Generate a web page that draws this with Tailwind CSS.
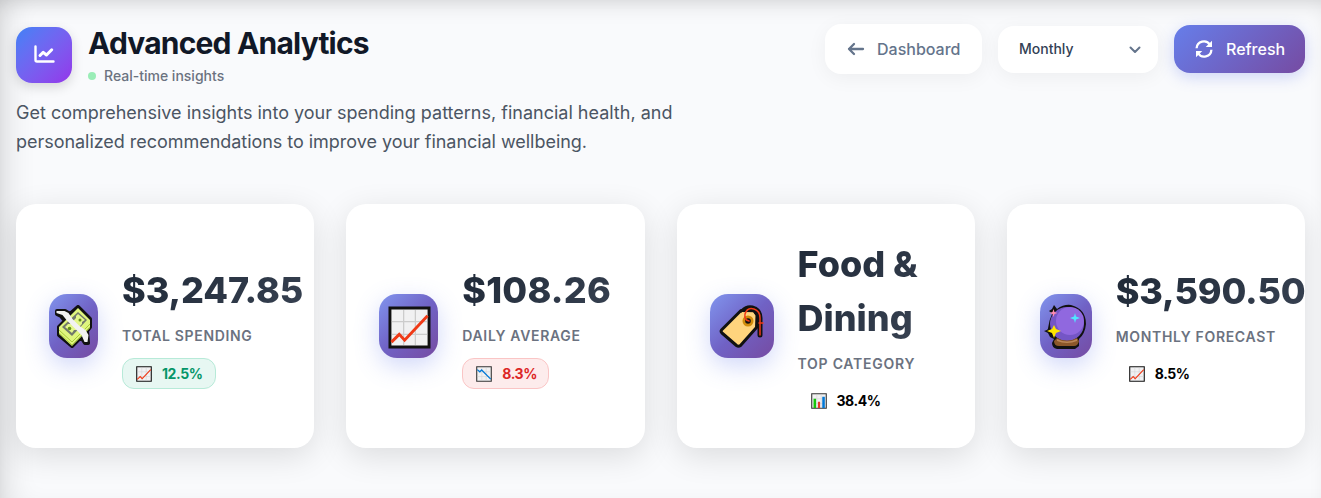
<!DOCTYPE html>
<html lang="en">
<head>
<meta charset="utf-8">
<title>Advanced Analytics</title>
<script src="https://cdn.jsdelivr.net/npm/@tailwindcss/browser@4"></script>
</head>
<body class="h-[498px] overflow-hidden bg-[#f9fafc] font-['Inter',sans-serif]">
<svg class="hidden">
  <defs>
    <symbol id="up" viewBox="0 0 44 44"><path fill="#f1f1f2" stroke="#111" stroke-width="3" d="M2 2h40v40H2z"/><path d="M16 4v36M28 4v36M4 16h36M4 29h36" stroke="#ccc" stroke-width="1.3"/><path d="m3.500 37 8-8 5.500 6L40.500 10" fill="none" stroke="#f03a17" stroke-width="3"/></symbol>
    <symbol id="down" viewBox="0 0 44 44"><path fill="#f1f1f2" stroke="#333" stroke-width="3" d="M2 2h40v40H2z"/><path d="M16 4v36M28 4v36M4 16h36M4 29h36" stroke="#ccc" stroke-width="1.3"/><path d="m3.500 10 7 6 5-5L40.500 36" fill="none" stroke="#0078d7" stroke-width="3.500"/></symbol>
    <symbol id="bars" viewBox="0 0 44 44"><path fill="#f1f1f2" stroke="#333" stroke-width="3" d="M2 2h40v40H2z"/><path d="M16 4v36M28 4v36M4 16h36M4 29h36" stroke="#ccc" stroke-width="1.3"/><path fill="#16c60c" d="M7 16h7v25H7z"/><path fill="#e8372b" d="M19 24h6v17h-6z"/><path fill="#0078d7" d="M31 10h7v31h-7z"/></symbol>
  </defs>
</svg>
<div class="h-[498px] px-4 pt-6 shadow-[inset_24px_0_32px_-20px_rgba(0,0,0,0.14),inset_0_14px_24px_-14px_rgba(0,0,0,0.18)]">
  <header class="flex h-[132px] items-start justify-between">
    <div class="w-[672px]">
      <div class="flex gap-4 pt-[3px]">
        <div class="flex size-14 items-center justify-center rounded-2xl bg-linear-to-br from-[#3b82f6] to-[#9333ea] shadow-[0_4px_12px_rgba(0,0,0,0.15)]">
          <svg class="size-6" viewBox="0 0 24 24" fill="none" stroke="#fff" stroke-width="2.400" stroke-linecap="round" stroke-linejoin="round"><path d="M3.500 3.500v13.500a1.500 1.500 0 0 0 1.500 1.500h16.500"/><path d="m8 12.500 3.200-3.200 3.300 2.700 5.200-5.200" stroke-width="3"/></svg>
        </div>
        <div>
          <h1 class="-mt-0.5 h-[37px] whitespace-nowrap text-[30px] leading-[37px] font-bold tracking-[-0.027em] text-[#111827]">Advanced Analytics</h1>
          <div class="mt-1 flex h-5 items-center gap-2 text-sm font-medium text-[#6b7280]"><span class="size-2 rounded-full bg-[#9aedb7]"></span>Real-time insights</div>
        </div>
      </div>
      <p class="mt-3 whitespace-nowrap text-lg leading-[29.25px] text-[#4b5563]">Get comprehensive insights into your spending patterns, financial health, and<br><span class="tracking-[-0.002em]">personalized recommendations to improve your financial wellbeing.</span></p>
    </div>
    <div class="flex items-center gap-4">
      <button class="flex h-[50px] w-[157px] items-center gap-3 rounded-2xl bg-white pl-[22px] text-base font-medium text-[#64748b] shadow-[0_4px_20px_rgba(0,0,0,0.05)]">
        <svg class="size-[18px]" viewBox="0 0 18 18" fill="none" stroke="currentColor" stroke-width="2.300" stroke-linecap="round" stroke-linejoin="round"><path d="M16 9H2M7 4 2 9l5 5"/></svg>Dashboard</button>
      <button class="flex h-[47px] w-40 items-center justify-between rounded-2xl bg-white pr-[17px] pl-[21px] text-sm font-medium text-[#334155] shadow-[0_4px_20px_rgba(0,0,0,0.05)]">Monthly
        <svg class="size-3" viewBox="0 0 12 12" fill="none" stroke="#64748b" stroke-width="2" stroke-linecap="round" stroke-linejoin="round"><path d="m1.500 4.500 4.500 4.500L10.500 4.500"/></svg></button>
      <button class="flex h-12 w-[131px] items-center gap-[13px] rounded-2xl bg-linear-[135deg] from-[#667eea] to-[#764ba2] pl-[21px] text-base font-medium text-white shadow-[0_4px_15px_rgba(102,126,234,0.3)]">
        <svg class="size-[18px]" viewBox="0 0 18 18" fill="none" stroke="currentColor" stroke-width="2.300"><path d="M1.600 8.300A7.200 7.200 0 0 1 15 5M16.400 9.700A7.200 7.200 0 0 1 3 13"/><path fill="currentColor" stroke="none" d="M17 .8v6.300h-6.300zM1 17.200v-6.300h6.300z"/></svg>Refresh</button>
    </div>
  </header>

  <main class="mt-12 grid grid-cols-4 gap-8">
    <section class="flex h-[244px] items-center gap-6 overflow-hidden rounded-[20px] bg-white pl-[33px] shadow-[0_8px_32px_rgba(0,0,0,0.12)]">
      <div class="flex h-16 w-[49px] shrink-0 items-center justify-center rounded-[18px] bg-linear-[135deg] from-[#8195ee] via-[#7062c5] to-[#764ba2] shadow-[0_8px_24px_rgba(102,126,234,0.3)]">
        <svg class="mt-0.5 h-[44px] w-[40px] shrink-0" viewBox="0 0 40 44"><path d="M3 6h8l5 3 8-7 12 12v8l-3 4 1 12h-3l-4-6-9 9L5 30v-8l6-6-4-5-4-2z" fill="#111" stroke="#111" stroke-width="4" stroke-linejoin="round"/><path fill="#dff57e" d="m5 22 19-19 12 12v8L18 41 5 29z"/><path d="m5 25 13 12 18-18M5 28l13 12 18-18" fill="none" stroke="#a8cb37" stroke-width="1"/><path fill="#71786b" d="m8 22 16-15 9 8-15 16z"/><path fill="#e3f78a" d="m11 22 3-3h2l6-6v-2l2-2 7 6-3 2v2l-6 6h-2l-2 3z"/><circle cx="15.500" cy="23.500" r="1.800" fill="#64901c"/><circle cx="26" cy="15" r="1.500" fill="#64901c"/><path d="M2.500 6h8l4 2 4 6 7 7 6 4 3 5-1 7h-3l-3-7-6-6-9-9-4-5-6-2z" fill="#f2f2f2"/></svg>
      </div>
      <div class="shrink-0">
        <div class="text-4xl leading-[54px] font-extrabold tracking-[-0.003em] bg-linear-[135deg] from-[#1f2937] to-[#374151] bg-clip-text text-transparent">$3,247.85</div>
        <div class="mt-2 h-[21px] text-sm leading-[21px] font-semibold tracking-[0.048em] text-[#6b7280]">TOTAL SPENDING</div>
        <div class="mt-3 flex h-[31px] w-[94px] items-center gap-2.5 rounded-xl border border-[#b7ead8] bg-[#e7f7f2] pl-[13px] text-sm font-bold tracking-[-0.03em] text-[#059669]"><svg class="size-4"><use href="#up"/></svg>12.5%</div>
      </div>
    </section>
    <section class="flex h-[244px] items-center gap-6 overflow-hidden rounded-[20px] bg-white pl-[33px] shadow-[0_8px_32px_rgba(0,0,0,0.12)]">
      <div class="flex h-16 w-[59px] shrink-0 items-center justify-center rounded-[18px] bg-linear-[135deg] from-[#8195ee] via-[#7062c5] to-[#764ba2] shadow-[0_8px_24px_rgba(102,126,234,0.3)]"><svg class="mt-0.5 ml-0.5 size-[43px]"><use href="#up"/></svg></div>
      <div class="shrink-0">
        <div class="text-4xl leading-[54px] font-extrabold tracking-[0.006em] bg-linear-[135deg] from-[#1f2937] to-[#374151] bg-clip-text text-transparent">$108.26</div>
        <div class="mt-2 h-[21px] text-sm leading-[21px] font-semibold tracking-[0.048em] text-[#6b7280]">DAILY AVERAGE</div>
        <div class="mt-3 flex h-[31px] w-[87px] items-center gap-2.5 rounded-xl border border-[#fac5c5] bg-[#fdecec] pl-[13px] text-sm font-bold tracking-[-0.03em] text-[#dc2626]"><svg class="size-4"><use href="#down"/></svg>8.3%</div>
      </div>
    </section>
    <section class="flex h-[244px] items-center gap-6 overflow-hidden rounded-[20px] bg-white pl-[33px] shadow-[0_8px_32px_rgba(0,0,0,0.12)]">
      <div class="flex size-16 shrink-0 items-center justify-center rounded-[18px] bg-linear-[135deg] from-[#8195ee] via-[#7062c5] to-[#764ba2] shadow-[0_8px_24px_rgba(102,126,234,0.3)]"><svg class="h-[46px] w-[46px]" viewBox="0 0 46 46" fill="none" stroke-linecap="round" stroke-linejoin="round"><path fill="#ffd47d" stroke="#111" stroke-width="3" d="M2.500 27 22 7.500l13 .5 3 4-.5 12.500-16 18q-2 1.500-4 0L3 30q-1.500-1.500-.5-3z"/><path d="M24 8q5-5 12-2 5 3 5 9v17" stroke="#111" stroke-width="5"/><path fill="#ffd47d" d="m23 9 11 .5 2 3v11l-8 6-8-16z"/><circle cx="29" cy="18" r="5.500" fill="#d18b0b"/><circle cx="29" cy="18" r="2.800" fill="#111"/><path d="M30 18q-5-1-4-7 2-7 9-5 6 2 6 9v17M40 20h4" stroke="#f03a17" stroke-width="1.500"/></svg></div>
      <div class="shrink-0 pt-px">
        <div class="text-4xl leading-[54px] font-extrabold bg-linear-[135deg] from-[#1f2937] to-[#374151] bg-clip-text text-transparent">Food &amp;<br>Dining</div>
        <div class="mt-2 h-[21px] text-sm leading-[21px] font-semibold tracking-[0.054em] text-[#6b7280]">TOP CATEGORY</div>
        <div class="mt-[11px] flex h-[31px] items-center gap-2.5 pl-[13px] text-sm font-bold tracking-[-0.03em] text-black"><svg class="size-4"><use href="#bars"/></svg>38.4%</div>
      </div>
    </section>
    <section class="flex h-[244px] items-center gap-6 overflow-hidden rounded-[20px] bg-white pl-[33px] shadow-[0_8px_32px_rgba(0,0,0,0.12)]">
      <div class="flex h-16 w-[52px] shrink-0 items-center justify-center rounded-[18px] bg-linear-[135deg] from-[#8195ee] via-[#7062c5] to-[#764ba2] shadow-[0_8px_24px_rgba(102,126,234,0.3)]"><svg class="h-[46px] w-[43px]" viewBox="0 0 43 46"><path d="m5 28 2-10 3-8" stroke="#111" stroke-width="3" fill="none"/><path d="M0 28q5-1 6-5 0-8 3-12l-4-3 3-2 2-4 3 4Q20 1 27 2q15 4 15 19-1 10-7 15v7l-4 3H13q-5-1-5-6l2-4-4-2-2-4z" fill="#111"/><circle cx="23" cy="21" r="17" fill="#7456c6"/><ellipse cx="26" cy="18" rx="14" ry="14" fill="#9068df"/><path d="M13 35q10 5 20 0l2 3q-1 5-5 5H15q-5 0-5-5z" fill="#8b572a"/><path d="M13 36q10 5 20 0v2q-10 4-20 0z" fill="#bb8657"/><path d="m10 22 2 4 5 2-5 2-2 5-2-5-5-2 5-2z" fill="#ffe600"/><path d="m31 10 1 3.500 4 1.500-4 1.500-1 3.500-1-3.500-4-1.500 4-1.500z" fill="#50e6ff"/><path d="m9.500 6 1 3 3 1-3 1-1 3-1-3-3-1 3-1z" fill="#ff8bb0"/></svg></div>
      <div class="shrink-0 pt-px">
        <div class="text-4xl leading-[54px] font-extrabold tracking-[-0.005em] bg-linear-[135deg] from-[#1f2937] to-[#374151] bg-clip-text text-transparent">$3,590.50</div>
        <div class="mt-2 h-[21px] text-sm leading-[21px] font-semibold tracking-[0.048em] text-[#6b7280]">MONTHLY FORECAST</div>
        <div class="mt-[11px] flex h-[31px] items-center gap-2.5 pl-[13px] text-sm font-bold tracking-[-0.03em] text-black"><svg class="size-4"><use href="#up"/></svg>8.5%</div>
      </div>
    </section>
  </main>
</div>
</body>
</html>
